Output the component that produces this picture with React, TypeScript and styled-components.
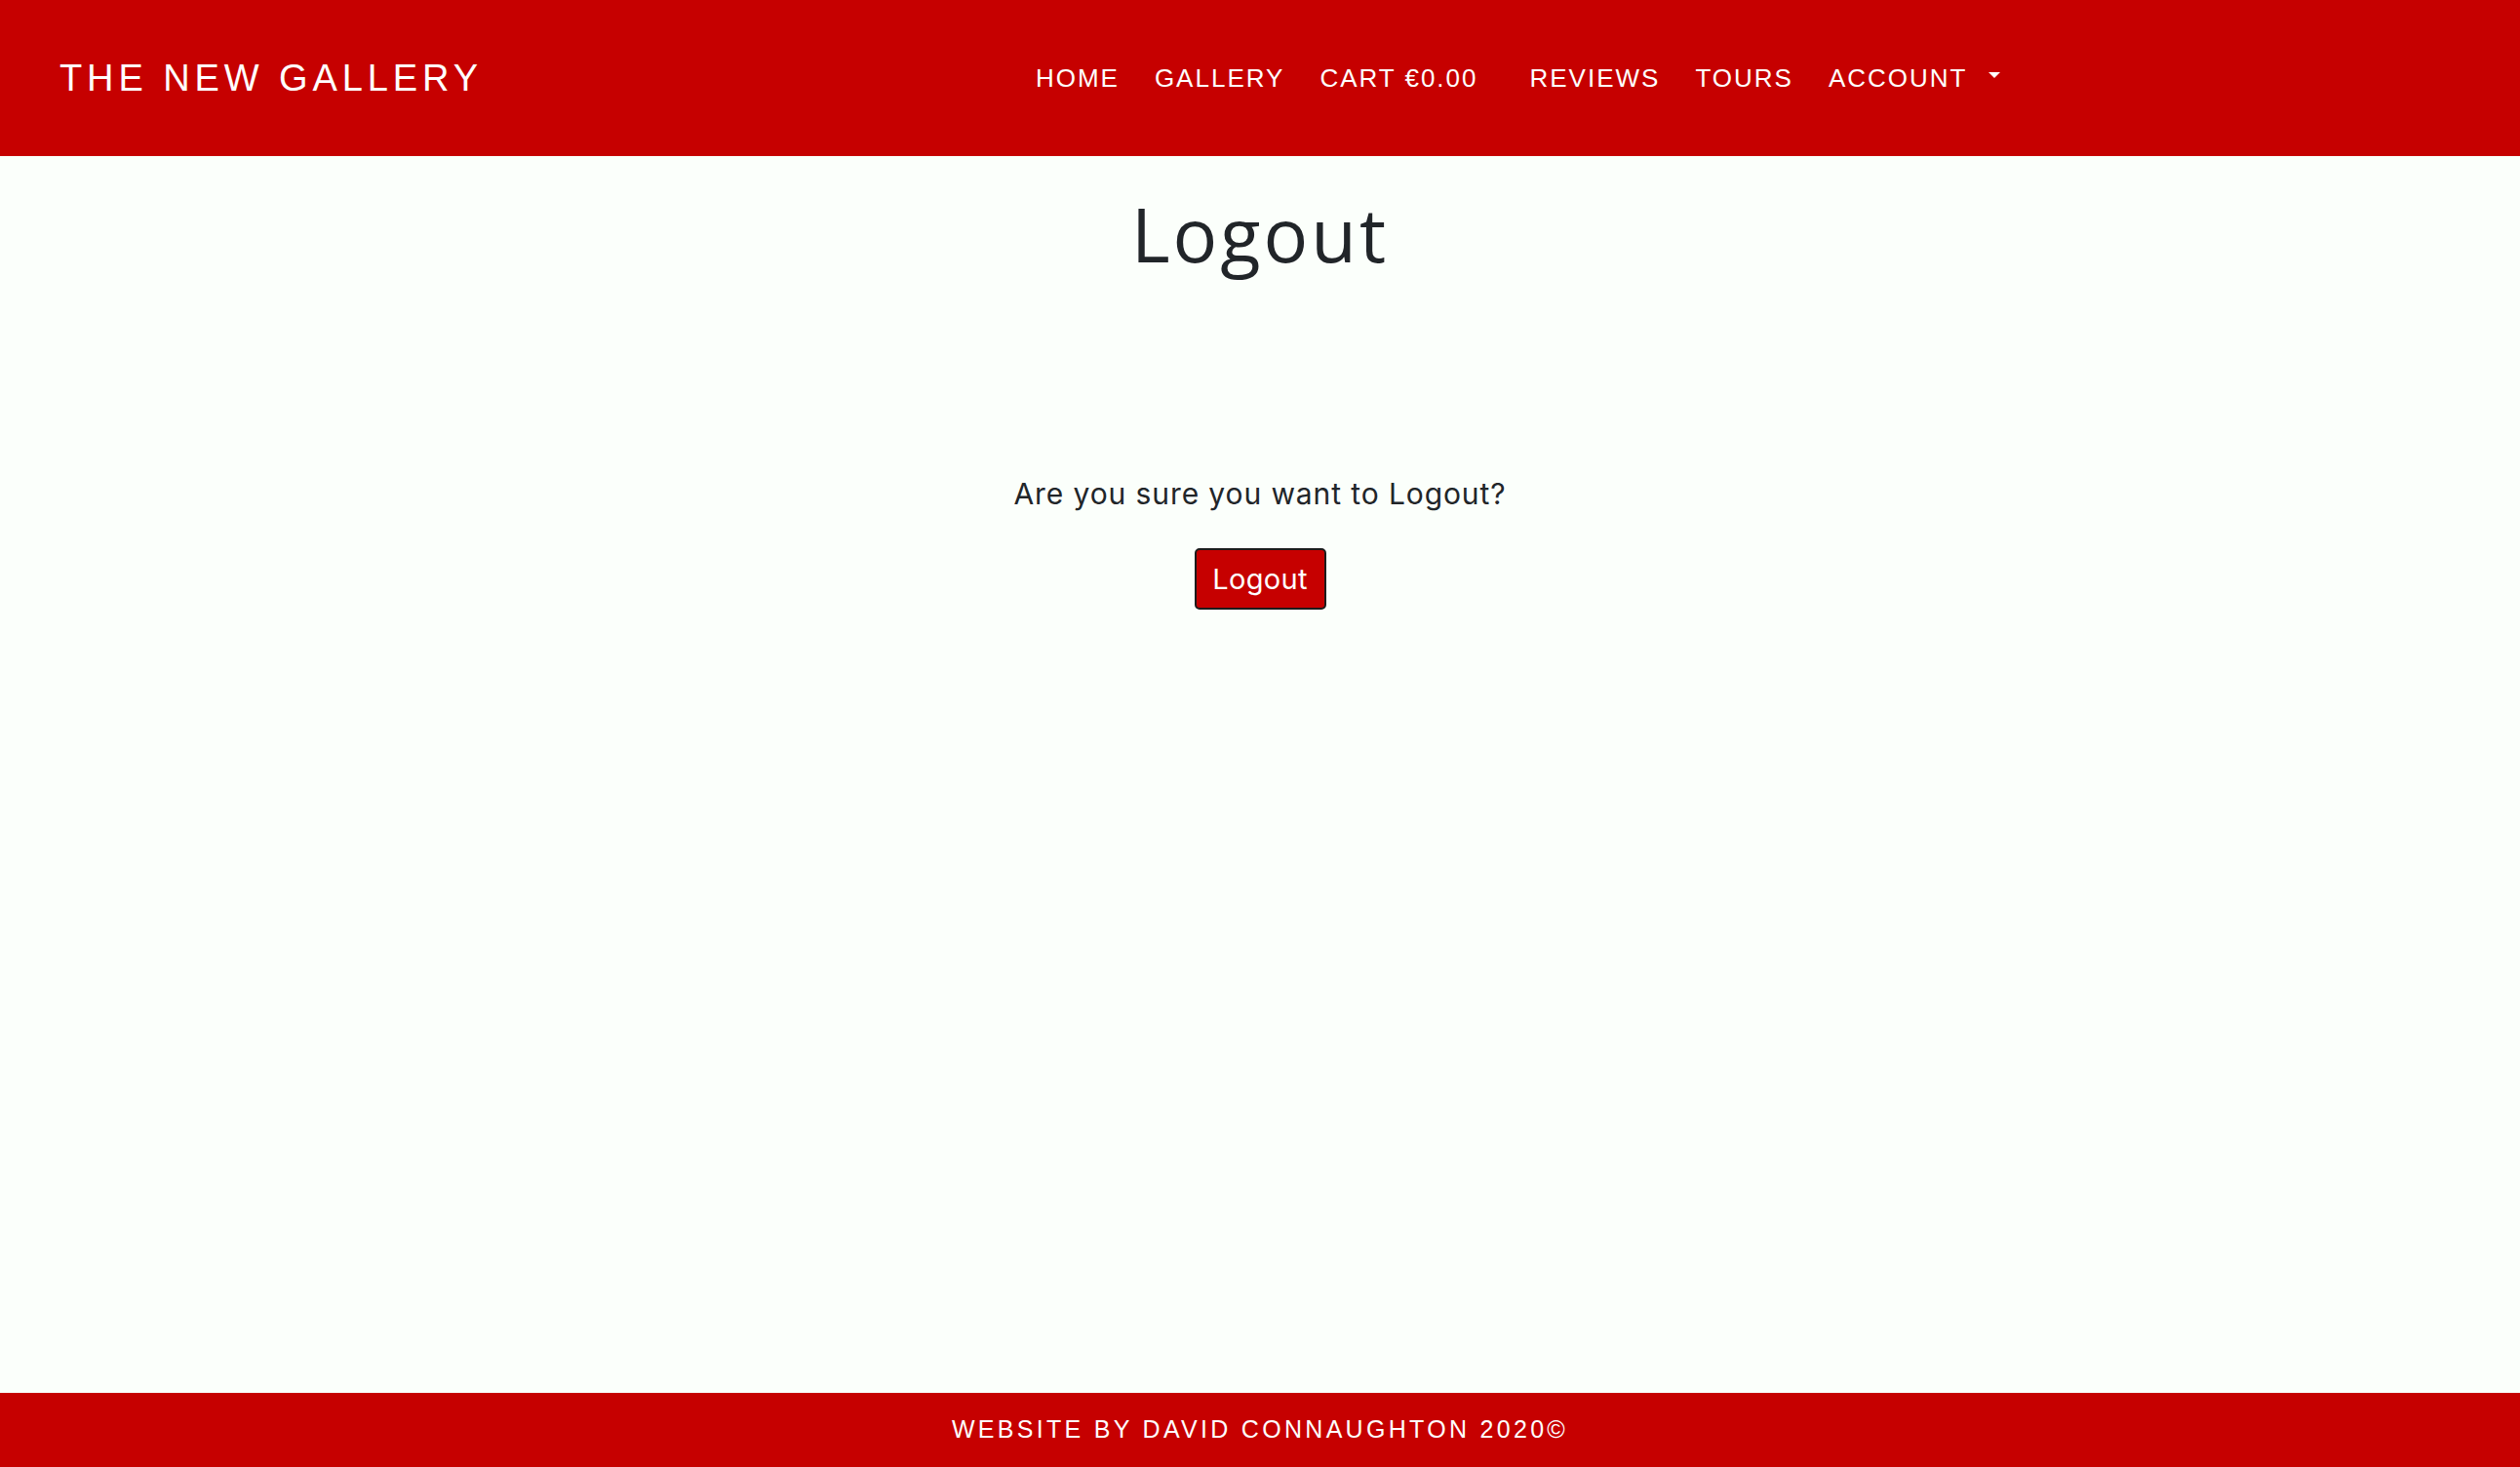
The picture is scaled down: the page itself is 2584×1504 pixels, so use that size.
import React from "react";
import styled, { createGlobalStyle } from "styled-components";

const RED = "#c60000";

const Global = createGlobalStyle`
  html, body { margin: 0; padding: 0; }
  body {
    background: #fbfffb;
    font-family: Inter, "Liberation Sans", sans-serif;
    color: #212529;
  }
  #root { min-height: 100vh; }
`;

const Page = styled.div`
  min-height: 100vh;
  display: flex;
  flex-direction: column;
`;

const Header = styled.header`
  height: 160px;
  background: ${RED};
  display: flex;
  align-items: center;
  padding: 0 0 0 61px;
  box-sizing: border-box;
`;

const Brand = styled.a`
  font-family: "Liberation Sans", Arial, sans-serif;
  font-size: 38px;
  letter-spacing: 4.9px;
  color: #fff;
  text-decoration: none;
  white-space: nowrap;
`;

const Nav = styled.nav`
  display: flex;
  align-items: center;
  margin-left: 549px;
`;

const NavLink = styled.a<{ $extra?: boolean }>`
  font-family: "Liberation Sans", Arial, sans-serif;
  font-size: 26px;
  letter-spacing: 2px;
  color: #fff;
  text-decoration: none;
  padding: 0 ${(p) => (p.$extra ? 35 : 18)}px 0 18px;
  white-space: nowrap;
  display: flex;
  align-items: center;
`;

const Caret = styled.span`
  display: inline-block;
  margin-left: 21px;
  width: 0;
  height: 0;
  border-left: 6px solid transparent;
  border-right: 6px solid transparent;
  border-top: 6px solid #fff;
  position: relative;
  top: -3px;
`;

const Main = styled.main`
  flex: 1;
  display: flex;
  flex-direction: column;
  align-items: center;
`;

const Title = styled.h1`
  font-family: "Open Sans", sans-serif;
  font-weight: 400;
  font-size: 76px;
  letter-spacing: 3px;
  line-height: 1;
  margin: 42px 0 0;
  color: #212529;
`;

const Question = styled.p`
  font-size: 30px;
  letter-spacing: 0.9px;
  margin: 210px 0 0;
  line-height: 36px;
`;

const Button = styled.button`
  margin-top: 38px;
  width: 135px;
  height: 63px;
  background: ${RED};
  color: #fff;
  border: 2px solid #1c1c1c;
  border-radius: 5px;
  font-family: Inter, "Liberation Sans", sans-serif;
  font-size: 29px;
  letter-spacing: 0.3px;
  cursor: pointer;
  padding: 0;
`;

const Footer = styled.footer`
  height: 76px;
  background: ${RED};
  display: flex;
  align-items: center;
  justify-content: center;
`;

const FooterText = styled.span`
  font-family: "Liberation Sans", Arial, sans-serif;
  font-size: 25px;
  letter-spacing: 3.3px;
  color: #fff;
  position: relative;
  top: -1px;
`;

export default function App() {
  return (
    <Page>
      <Global />
      <Header>
        <Brand href="#">THE NEW GALLERY</Brand>
        <Nav>
          <NavLink href="#">HOME</NavLink>
          <NavLink href="#">GALLERY</NavLink>
          <NavLink href="#" $extra>CART €0.00</NavLink>
          <NavLink href="#">REVIEWS</NavLink>
          <NavLink href="#">TOURS</NavLink>
          <NavLink href="#">
            ACCOUNT
            <Caret />
          </NavLink>
        </Nav>
      </Header>
      <Main>
        <Title>Logout</Title>
        <Question>Are you sure you want to Logout?</Question>
        <Button>Logout</Button>
      </Main>
      <Footer>
        <FooterText>WEBSITE BY DAVID CONNAUGHTON 2020©</FooterText>
      </Footer>
    </Page>
  );
}
